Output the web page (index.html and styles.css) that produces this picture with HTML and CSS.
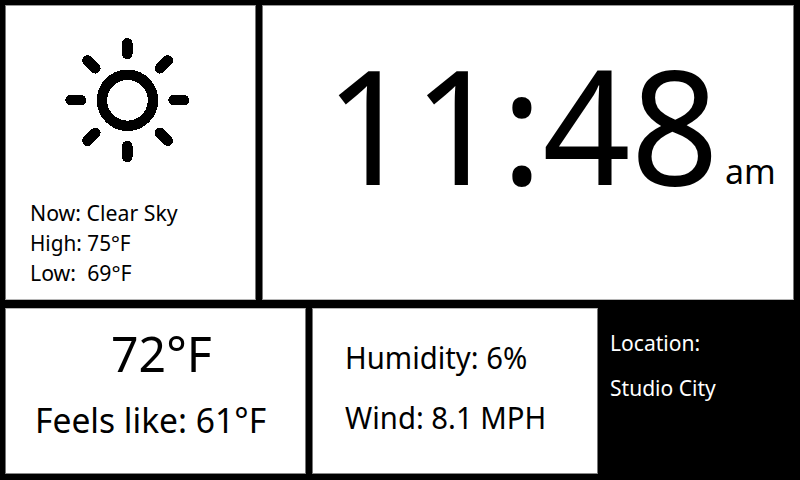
FILE: index.html
```
<!DOCTYPE html>
<html lang="en"><head><meta charset="utf-8"><title>Weather</title><link rel="stylesheet" href="styles.css"></head>
<body><main class="screen">
<div class="row top">
<section class="panel now"><svg class="sun" viewBox="0 0 124 124" width="124" height="124" fill="none" stroke="#000" stroke-width="10.400" stroke-linecap="round" shape-rendering="crispEdges"><circle cx="62.500" cy="62.300" r="25.500"/><path d="M62.300 5.200v11M62.300 108v11M5.500 62.200h10.500M108.500 62.200h10.500M22.400 22.400l8 8M94.800 94.800l8 8M22.400 102.800l8-8M94.800 30.400l8-8"/></svg>
<div class="facts"><p class="sky">Now: Clear Sky</p><p class="high">High: 75°F</p><p class="low">Low:&nbsp; 69°F</p></div></section>
<section class="panel clock"><span class="time">11:48</span><span class="ampm">am</span></section>
</div>
<div class="row bottom">
<section class="panel temp"><p class="degrees">72°F</p><p class="feels">Feels like: 61°F</p></section>
<section class="panel air"><p>Humidity: 6%</p><p>Wind: 8.1 MPH</p></section>
<section class="place"><p>Location:</p><p>Studio City</p></section>
</div>
</main></body></html>
```
FILE: styles.css
```
* { box-sizing: border-box; }
body, p { margin: 0; }
body { background: #000; font-family: "Noto Sans", sans-serif; color: #000; }
p, span { white-space: pre; transform-origin: 0 0; }
.screen { width: 800px; height: 480px; padding: 5px; display: flex; flex-direction: column; gap: 8px; overflow: hidden; }
.row { display: flex; }
.top { height: 295px; gap: 6px; }
.bottom { height: 166px; gap: 6px; }
.panel { background: #fff; border: 1px solid; border-color: #999 #777 #b5b5b5 #777; }
.bottom .panel { border-top-color: #b5b5b5; border-bottom-color: #888; }
.now { width: 251px; }
.sun { display: block; margin: 32px 0 0 59px; }
.facts { margin: 35px 0 0 24px; font-size: 22px; line-height: 30px; }
.sky { transform: scaleX(.967); }
.high { transform: scaleX(.943); }
.low { transform: scaleX(.968); }
.clock { width: 532px; display: flex; align-items: baseline; padding-left: 62px; }
.time { width: 400px; font-size: 160px; line-height: 234px; transform: scaleX(.963); }
.ampm { font-size: 35px; position: relative; top: -1px; transform: scaleX(.97); }
.temp { width: 301px; padding: 14px 0 0 29px; }
.degrees { font-size: 50px; line-height: 60px; padding-left: 79px; transform: scaleX(.963); }
.feels { font-size: 35px; line-height: 60px; margin-top: 7px; transform: scaleX(.96); }
.air { width: 286px; padding: 19px 0 0 32px; font-size: 30px; line-height: 60px; }
.air p { transform: scaleX(.976); }
.place { color: #fff; font-size: 22px; line-height: 45px; padding: 12px 0 0 6px; }
.place p { transform: scaleX(.957); }
```
